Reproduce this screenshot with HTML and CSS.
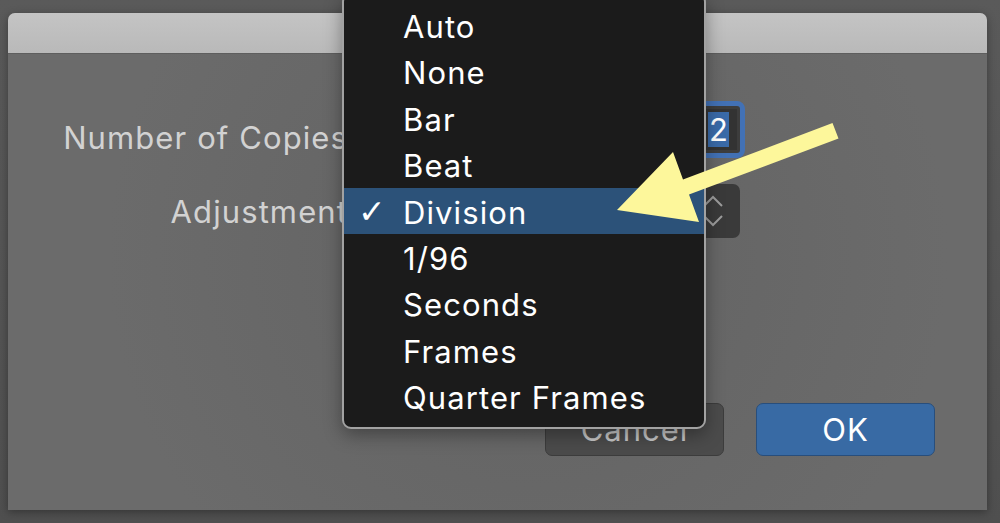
FILE: index.html
```html
<!DOCTYPE html>
<html>
<head>
<meta charset="utf-8">
<link rel="stylesheet" href="styles.css">
</head>
<body>
<div class="screen">
  <div class="dialog">
    <div class="titlebar"></div>
    <div class="content">
      <div class="form">
        <div class="label first">Number of Copies:</div>
        <div class="numfield"><div class="numinner"><span class="sel">2</span></div></div>
        <div class="label">Adjustment:</div>
        <div class="popup"><span class="popval"></span><span class="stepper"><svg width="22" height="36" viewBox="0 0 22 36"><path d="M2 13 L11 4 L20 13 M2 23 L11 32 L20 23" fill="none" stroke="#9c9c9c" stroke-width="2"/></svg></span></div>
      </div>
      <div class="buttons">
        <button class="btn cancel">Cancel</button>
        <button class="btn ok">OK</button>
      </div>
    </div>
  </div>
  <div class="menu">
    <div class="item">Auto</div>
    <div class="item">None</div>
    <div class="item">Bar</div>
    <div class="item">Beat</div>
    <div class="item selected"><span class="check">✓</span>Division</div>
    <div class="item">1/96</div>
    <div class="item">Seconds</div>
    <div class="item">Frames</div>
    <div class="item">Quarter Frames</div>
  </div>
  <svg class="arrow" width="1000" height="523" viewBox="0 0 1000 523">
    <polygon points="617,210 673,152 683,179.5 832.5,123 838.5,138.5 689,194.5 699,222" fill="#fdf79b"/>
  </svg>
</div>
</body>
</html>
```
FILE: styles.css
```css
* { box-sizing: border-box; }
html, body { margin: 0; padding: 0; }
body {
  width: 1000px;
  height: 523px;
  overflow: hidden;
  background: #545454;
  font-family: "Inter", "Liberation Sans", sans-serif;
}
.screen {
  position: relative;
  width: 1000px;
  height: 523px;
  padding: 13px 13px 0 8px;
  background: linear-gradient(#5a5a5a, #4f4f4f);
}
.dialog {
  width: 979px;
  height: 497px;
  background: #6b6b6b;
  border-radius: 7px 7px 0 0;
  box-shadow: 0 2px 8px rgba(0,0,0,0.35);
  display: flex;
  flex-direction: column;
  overflow: hidden;
}
.titlebar {
  height: 41px;
  flex: none;
  background: linear-gradient(#c4c4c4, #b9b9b9);
  border-bottom: 1px solid #5e5e5e;
}
.content {
  flex: 1;
  display: flex;
  flex-direction: column;
  background: radial-gradient(ellipse 420px 420px at 520px 200px, #626262, #6b6b6b);
}
.form {
  margin-top: 47px;
  display: grid;
  grid-template-columns: 350px 384px;
  grid-template-rows: 57px 54px;
  row-gap: 26px;
  column-gap: 3px;
  align-items: center;
}
.label {
  text-align: right;
  color: #d2d2d2;
  font-size: 31px;
  letter-spacing: 1.1px;
  white-space: nowrap;
}
.label.first {
  padding-top: 16px;
}
.numfield {
  justify-self: end;
  width: 300px;
  height: 57px;
  border: 5px solid #4271b5;
  border-radius: 8px;
  padding: 3px;
  background: #3d3d3d;
}
.numinner {
  height: 100%;
  background: #333;
  display: flex;
  align-items: center;
  justify-content: flex-end;
  padding-right: 8px;
  font-size: 31px;
  color: #fff;
}
.sel {
  background: #3a6aa8;
  padding: 0 1px;
  line-height: 35px;
}
.popup {
  justify-self: end;
  width: 360px;
  height: 54px;
  margin-right: 5px;
  background: #3a3a3a;
  border-radius: 7px;
  display: flex;
  align-items: center;
  justify-content: space-between;
  color: #ddd;
  font-size: 31px;
  padding-left: 12px;
}
.stepper {
  width: 38px;
  height: 54px;
  display: flex;
  align-items: center;
  justify-content: flex-start;
}
.buttons {
  margin-top: 165px;
  display: flex;
  justify-content: flex-end;
  gap: 32px;
  padding-right: 52px;
}
.btn {
  width: 179px;
  height: 53px;
  border-radius: 7px;
  font-family: "Inter", "Liberation Sans", sans-serif;
  font-size: 31px;
  letter-spacing: 1px;
  padding: 0;
}
.cancel {
  background: #4b4b4b;
  border: 1px solid #3c3c3c;
  color: #c8c8c8;
}
.ok {
  background: #386aa4;
  border: 1px solid #284e7c;
  color: #fff;
}
.menu {
  position: absolute;
  left: 342px;
  top: -7px;
  width: 364px;
  height: 436px;
  background: #1b1b1b;
  border: 2px solid #a2a2a2;
  border-radius: 9px;
  padding: 7px 0;
  box-shadow: 0 6px 18px rgba(0,0,0,0.35);
}
.item {
  position: relative;
  height: 46.4px;
  padding-top: 4px;
  line-height: 42.4px;
  padding-left: 59px;
  color: #fff;
  font-size: 31px;
  letter-spacing: 1.1px;
  white-space: nowrap;
}
.item.selected {
  background: #2c5279;
}
.check {
  position: absolute;
  left: 14px;
  top: 3px;
  font-family: "DejaVu Sans", sans-serif;
  font-weight: bold;
  font-size: 33px;
  letter-spacing: 0;
}
.arrow {
  position: absolute;
  left: 0;
  top: 0;
  pointer-events: none;
}
```
